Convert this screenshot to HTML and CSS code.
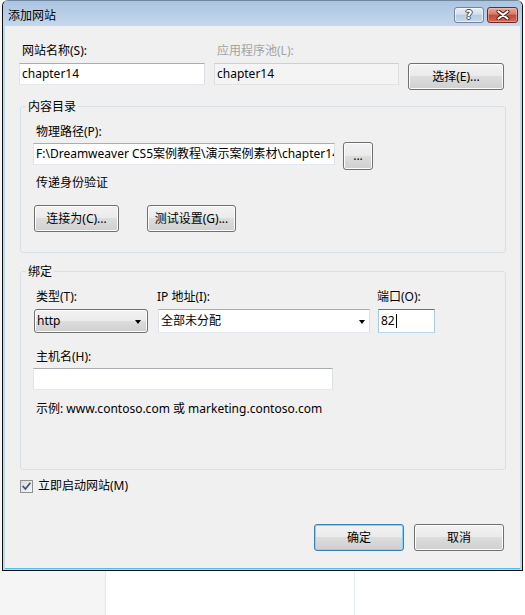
FILE: index.html
```html
<!DOCTYPE html>
<html lang="zh-CN">
<head>
<meta charset="utf-8">
<title>添加网站</title>
<link rel="stylesheet" href="styles.css">
</head>
<body>
<div class="desktop">
  <div class="backdrop">
    <div class="bd-side"></div>
    <div class="bd-main"></div>
    <div class="bd-right"></div>
  </div>

  <div class="window">
    <div class="titlebar">
      <span class="title">添加网站</span>
      <div class="tb-buttons">
        <button class="tb-btn help"><span class="qmark">?</span></button>
        <button class="tb-btn close">
          <svg width="14" height="10" viewBox="0 0 14 10">
            <path d="M2.5 1.5 L11.5 8.5 M11.5 1.5 L2.5 8.5" stroke="#4a1a14" stroke-width="4" stroke-linecap="round" fill="none"/>
            <path d="M2.5 1.5 L11.5 8.5 M11.5 1.5 L2.5 8.5" stroke="#ffffff" stroke-width="2.2" stroke-linecap="round" fill="none"/>
          </svg>
        </button>
      </div>
    </div>

    <div class="client">
      <div class="top-grid">
        <div class="lbl">网站名称(S):</div>
        <div class="lbl lbl-disabled">应用程序池(L):</div>
        <div></div>
        <div class="textbox">chapter14</div>
        <div class="textbox textbox-disabled">chapter14</div>
        <button class="btn btn-select">选择(E)...</button>
      </div>

      <fieldset class="group group-content">
        <legend>内容目录</legend>
        <div class="group-body content-body">
          <div class="lbl">物理路径(P):</div>
          <div class="path-row">
            <div class="textbox path-box">F:\Dreamweaver CS5案例教程\演示案例素材\chapter14</div>
            <button class="btn btn-browse">...</button>
          </div>
          <div class="lbl pass-lbl">传递身份验证</div>
          <div class="btn-row">
            <button class="btn btn-connect">连接为(C)...</button>
            <button class="btn btn-test">测试设置(G)...</button>
          </div>
        </div>
      </fieldset>

      <fieldset class="group group-binding">
        <legend>绑定</legend>
        <div class="group-body binding-body">
          <div class="bind-row">
            <div class="field field-type">
              <div class="lbl">类型(T):</div>
              <div class="combo combo-btn"><span>http</span><span class="arrow"></span></div>
            </div>
            <div class="field field-ip">
              <div class="lbl">IP 地址(I):</div>
              <div class="combo combo-edit"><span>全部未分配</span><span class="arrow"></span></div>
            </div>
            <div class="field field-port">
              <div class="lbl">端口(O):</div>
              <div class="textbox textbox-focus">82<span class="caret"></span></div>
            </div>
          </div>
          <div class="lbl host-lbl">主机名(H):</div>
          <div class="textbox host-box"></div>
          <div class="lbl example">示例: www.contoso.com 或 marketing.contoso.com</div>
        </div>
      </fieldset>

      <div class="check-row">
        <span class="checkbox">
          <svg width="11" height="11" viewBox="0 0 11 11">
            <path d="M2.2 5.6 L4.4 8 L8.8 2.4" stroke="#3e4f7c" stroke-width="1.7" fill="none" stroke-linecap="square"/>
          </svg>
        </span>
        <span>立即启动网站(M)</span>
      </div>

      <div class="footer">
        <button class="btn btn-default">确定</button>
        <button class="btn btn-cancel">取消</button>
      </div>
    </div>
  </div>
</div>
</body>
</html>
```

FILE: styles.css
```css
* { box-sizing: border-box; }

html, body {
  margin: 0;
  padding: 0;
}

body {
  width: 525px;
  height: 615px;
  overflow: hidden;
  background: #ffffff;
  font-family: "Noto Sans", "Noto Sans CJK SC", sans-serif;
  font-size: 12px;
  line-height: 16px;
  color: #000;
}

.desktop {
  position: relative;
  width: 525px;
  height: 615px;
}

.backdrop {
  display: flex;
  height: 100%;
}

.bd-side {
  width: 106px;
  background: #f5f5f5;
  border-right: 1px solid #dfe8f0;
}

.bd-main {
  width: 249px;
  background: #ffffff;
  border-right: 1px solid #e6edf4;
}

.bd-right {
  flex: 1;
  background: #ffffff;
}

/* window */
.window {
  position: absolute;
  left: 2px;
  top: 0;
  width: 521px;
  height: 571px;
  border: 1px solid #0f0f0f;
  border-top-color: #71869e;
  border-radius: 6px 6px 0 0;
  background: #bcd7ef;
  padding: 0 2px 1px 2px;
  display: flex;
  flex-direction: column;
  overflow: hidden;
}

.titlebar {
  height: 25px;
  margin: 0 -2px;
  padding: 0 4px 0 5px;
  background: linear-gradient(#abc4e0, #c4d8ee);
  display: flex;
  align-items: flex-start;
  justify-content: space-between;
  flex-shrink: 0;
}

.title {
  margin-top: 6px;
  font-family: "Noto Sans CJK SC", sans-serif;
  color: #000;
}

.tb-buttons {
  display: flex;
  gap: 3px;
  margin-top: 6px;
}

.tb-btn {
  height: 16px;
  padding: 0;
  border-radius: 3px;
  display: flex;
  align-items: center;
  justify-content: center;
  cursor: default;
}

.help {
  width: 30px;
  border: 1px solid #71849b;
  background: linear-gradient(#e6eef8 0%, #d3e0ef 45%, #b9cbe1 50%, #c6d7eb 100%);
  box-shadow: inset 0 0 0 1px rgba(255,255,255,0.55);
}

.qmark {
  font-family: "DejaVu Sans", sans-serif;
  font-weight: bold;
  font-size: 12px;
  line-height: 12px;
  color: #ffffff;
  text-shadow: 1px 0 0 #3b4b60, -1px 0 0 #3b4b60, 0 1px 0 #3b4b60, 0 -1px 0 #3b4b60;
}

.close {
  width: 31px;
  border: 1px solid #6b2b24;
  background: linear-gradient(#e9a99b 0%, #d67865 45%, #c24a37 50%, #d06a55 100%);
  box-shadow: inset 0 0 0 1px rgba(255,210,200,0.45);
}

.client {
  flex: 1;
  background: #f0f0f0;
  border-bottom: 1px solid #49c1ec;
  padding: 17px 16px 0 14px;
  display: flex;
  flex-direction: column;
  align-items: flex-start;
}

/* labels */
.lbl {
  height: 16px;
  line-height: 16px;
  padding-left: 3px;
  white-space: nowrap;
}

.lbl-disabled {
  color: #a3a3a3;
}

/* top grid */
.top-grid {
  display: grid;
  grid-template-columns: 186px 185px 96px;
  column-gap: 9px;
  row-gap: 4px;
  align-items: start;
}

/* text boxes */
.textbox {
  height: 22px;
  border: 1px solid;
  border-color: #abadb3 #dbdfe6 #e3e9ef #e2e3ea;
  background: #ffffff;
  padding: 0 2px;
  line-height: 20px;
  white-space: nowrap;
  overflow: hidden;
}

.textbox-disabled {
  background: #f4f4f4;
  border-color: #cfcfcf #dedede #e3e3e3 #dedede;
}

.textbox-focus {
  border-color: #3d7bad #a4c9e3 #b7d9ed #a4c9e3;
  display: flex;
  align-items: center;
}

.caret {
  width: 1px;
  height: 14px;
  margin-left: 1px;
  background: #000;
}

/* buttons */
.btn {
  font-family: "Noto Sans", "Noto Sans CJK SC", sans-serif;
  font-size: 12px;
  line-height: 16px;
  color: #000;
  padding: 0;
  height: 27px;
  border: 1px solid #707070;
  border-radius: 3px;
  background: linear-gradient(#f2f2f2 0%, #ebebeb 48%, #dddddd 50%, #cfcfcf 100%);
  box-shadow: inset 0 0 0 1px #fcfcfc;
  display: flex;
  align-items: center;
  justify-content: center;
  cursor: default;
}

.btn-select {
  width: 96px;
}

/* groups */
.group {
  margin: 0;
  padding: 0;
  min-width: 0;
  width: 486px;
  margin-left: 1px;
  border: 1px solid #d5dfe5;
  border-radius: 3px;
}

.group legend {
  margin-left: 5px;
  padding: 0 2px;
  font-family: "Noto Sans CJK SC", sans-serif;
  line-height: 16px;
}

.group-content {
  margin-top: 8px;
}

.group-body {
  padding-left: 12px;
  display: flex;
  flex-direction: column;
  align-items: flex-start;
}

.content-body {
  padding-top: 10px;
  padding-bottom: 20px;
}

.path-row {
  display: flex;
  align-items: flex-start;
  gap: 8px;
  margin-top: 2px;
}

.path-box {
  width: 302px;
  margin-top: 1px;
}

.btn-browse {
  width: 30px;
  height: 28px;
}

.pass-lbl {
  margin-top: 5px;
}

.btn-row {
  display: flex;
  gap: 28px;
  margin-top: 14px;
  margin-left: 1px;
}

.btn-connect {
  width: 85px;
}

.btn-test {
  width: 89px;
}

/* binding */
.group-binding {
  margin-top: 10px;
}

.binding-body {
  padding-top: 10px;
  padding-bottom: 52px;
}

.bind-row {
  display: flex;
  align-items: flex-start;
  margin-left: 1px;
}

.field {
  display: flex;
  flex-direction: column;
  gap: 4px;
}

.field .lbl {
  padding-left: 0;
}

.field-type {
  width: 114px;
}

.field-type .lbl {
  padding-left: 2px;
}

.field-ip {
  width: 212px;
  margin-left: 10px;
}

.field-ip .lbl {
  margin-left: -1px;
}

.field-port {
  width: 57px;
  margin-left: 8px;
}

.field-port .lbl {
  margin-left: -1px;
}

.combo {
  height: 24px;
  display: flex;
  align-items: center;
  justify-content: space-between;
  padding: 0 6px 0 2px;
}

.combo-btn {
  border: 1px solid #707070;
  border-radius: 3px;
  background: linear-gradient(#f2f2f2 0%, #ebebeb 48%, #dddddd 50%, #cfcfcf 100%);
  box-shadow: inset 0 0 0 1px #fcfcfc;
}

.combo-edit {
  border: 1px solid;
  border-color: #abadb3 #dbdfe6 #e3e9ef #e2e3ea;
  background: #ffffff;
  padding-right: 4px;
}

.arrow {
  width: 0;
  height: 0;
  border-left: 3.5px solid transparent;
  border-right: 3.5px solid transparent;
  border-top: 4px solid #000;
  margin-top: 2px;
}

.field-port .textbox {
  height: 24px;
}

.host-lbl {
  margin-top: 16px;
}

.host-box {
  width: 300px;
  margin-top: 3px;
}

.example {
  margin-top: 11px;
}

/* checkbox */
.check-row {
  margin-top: 8px;
  margin-left: 1px;
  display: flex;
  align-items: center;
  gap: 5px;
  height: 16px;
}

.checkbox {
  width: 13px;
  height: 13px;
  border: 1px solid #8e8f8f;
  background: linear-gradient(135deg, #dcdcdc, #f6f6f6);
  display: flex;
  align-items: center;
  justify-content: center;
}

/* footer */
.footer {
  align-self: stretch;
  display: flex;
  justify-content: flex-end;
  gap: 10px;
  margin-top: 30px;
}

.footer .btn {
  width: 90px;
}

.btn-default {
  border-color: #3c7fb1;
  box-shadow: inset 0 0 0 1px #7fd6f7;
}
```
